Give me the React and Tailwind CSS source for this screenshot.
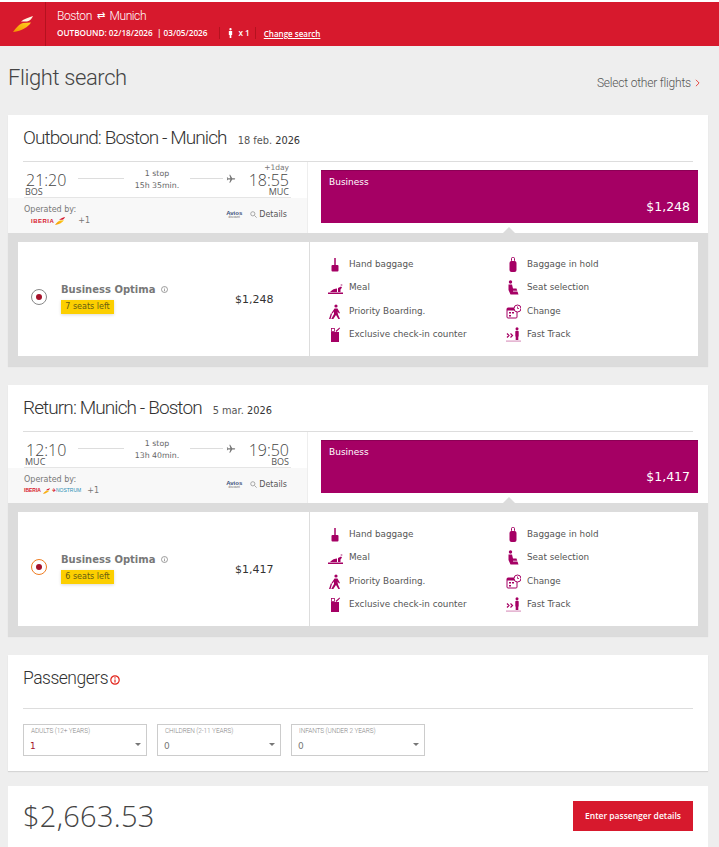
const bodyFont = "font-['Verdana','DejaVu_Sans',sans-serif]";
const lightFont = "font-['Roboto',sans-serif] font-light";
const digitFont = "font-['Open_Sans',sans-serif] font-light";
const smallBold = "font-['Open_Sans',sans-serif] font-semibold";

function Wing({ className, top = "#d7192d" }) {
	return (
		<svg viewBox="0 0 20 16" className={className}>
			<defs>
				<linearGradient id="wingFill" x1="0" y1="1" x2="1" y2="0">
					<stop offset="0" stopColor="#f39200" />
					<stop offset="1" stopColor="#ffd21f" />
				</linearGradient>
			</defs>
			<path d="M0 16 C3 12 6 8 10 7 L18 6.500 C15 11 9 15 0 16Z" fill="url(#wingFill)" />
			<path d="M8 5.500 C11 3 15 1.500 20 0 C19 2.500 17 5 14 5.500Z" fill={top} />
		</svg>
	);
}

const icons = {
	hand: (
		<>
			<rect x="6" y="1" width="2" height="7" opacity="0.75" />
			<rect x="3.5" y="8" width="7" height="6.5" rx="1" />
		</>
	),
	hold: (
		<>
			<rect x="5.5" y="0.5" width="3" height="4" rx="1" fill="none" stroke="currentColor" />
			<rect x="3.5" y="4" width="7" height="11" rx="2" />
		</>
	),
	meal: (
		<>
			<path d="M0 12.500h15V14H0z" />
			<path d="M2 12 C4 9.500 7 8.500 9 8.500 L9 12Z" />
			<path d="M10 12 V8 l3-1.500 1 1-1.500 2 v2.500Z" />
			<circle cx="13.500" cy="5" r="1" opacity="0.5" />
		</>
	),
	seat: (
		<>
			<circle cx="4.500" cy="2" r="1.700" />
			<path d="M2.500 4.500h3.500l1 4h3.500l2 6H4.500L2.500 10Z" />
			<path d="M7 10.500h5v1.500H7z" fill="white" opacity="0.5" />
		</>
	),
	boarding: (
		<>
			<circle cx="8" cy="2" r="1.600" />
			<path d="M6.500 4.500h3l2.500 4.500-1 .6-1.500-2 .5 3 2 4.500h-1.600L8 11l-3 4.500H3L6 10V7.500L4.500 9.500 3.500 9Z" />
			<path d="M1 15 3 9l1 1-1.500 5Z" />
		</>
	),
	change: (
		<>
			<rect x="1" y="4" width="10" height="10" rx="1" fill="none" stroke="currentColor" />
			<path d="M1 4h10v2.500H1z" />
			<rect x="3" y="8" width="2" height="1.500" />
			<rect x="6" y="8" width="2" height="1.500" />
			<rect x="3" y="11" width="2" height="1.500" />
			<circle cx="11.500" cy="4.500" r="3.500" fill="white" stroke="currentColor" />
			<path d="M11.500 2.500v2h1.500" fill="none" stroke="currentColor" strokeWidth="0.8" />
		</>
	),
	counter: (
		<>
			<path d="M3 5h8v10H3z" />
			<rect x="3.500" y="1.500" width="3" height="3" fill="none" stroke="currentColor" strokeWidth="0.8" />
			<path d="M7.500 4 11.500 0.500l.6.7L8.500 5Z" />
		</>
	),
	fast: (
		<>
			<path d="M1 6.500 3 8.500 1 10.500M4.500 6.500 6.500 8.500 4.500 10.500" fill="none" stroke="currentColor" strokeWidth="1.200" />
			<circle cx="11" cy="1.800" r="1.500" />
			<rect x="9.300" y="3.800" width="3.400" height="6" rx="1" />
			<rect x="9.700" y="9" width="2.600" height="4" />
			<rect x="0" y="13.500" width="15" height="1.200" opacity="0.4" />
		</>
	),
};

function Feature({ icon, label }) {
	return (
		<div className="flex items-center h-[23.3px]">
			<svg viewBox="0 0 15 15" className="w-[15px] h-[15px] text-[#a50064] fill-current shrink-0 mr-[6px]">
				{icons[icon]}
			</svg>
			<span className={`${bodyFont} text-[8.8px] text-[#555] whitespace-nowrap`}>{label}</span>
		</div>
	);
}

function FlightSection({ title, date, dep, depCode, arr, arrCode, plusDay, duration, logos, price, seats, focusRadio }) {
	return (
		<section className="ml-2 w-[700px] bg-white shadow-[0_1px_1px_rgba(0,0,0,0.08)]">
			<div className="mx-[15px] h-[47px] border-b border-[#ddd] flex items-center">
				<h2 className={`${lightFont} text-[19px] tracking-[-0.9px] text-[#333] whitespace-nowrap`}>{title}</h2>
				<span className={`${bodyFont} text-[9.800px] text-[#555] ml-[11px] pt-[6px] whitespace-nowrap`}>{date}</span>
			</div>
			<div className="flex h-[71px]">
				<div className="w-[300px] border-r border-[#eee] flex flex-col">
					<div className="h-[36px] mx-[16px] border-b border-[#e5e5e5] flex items-start relative">
						<div className="w-[44px] pl-[2px] pt-[10px] shrink-0">
							<div className={`${digitFont} text-[16px] leading-[16px] text-[#444]`}>{dep}</div>
							<div className={`${digitFont} text-[9px] leading-[8px] text-[#555] font-normal -ml-[1px]`}>{depCode}</div>
						</div>
						<div className="w-[46px] h-px bg-[#ddd] mt-[16px] ml-[10px]" />
						<div className={`${bodyFont} w-[66px] text-center text-[7.800px] leading-[12px] text-[#666] pt-[6px]`}>
							1 stop
							<br />
							{duration}
						</div>
						<div className="w-[33px] h-px bg-[#ddd] mt-[16px]" />
						<svg viewBox="0 0 24 24" className="w-[10px] h-[10px] fill-[#777] mt-[12px] ml-[3px] rotate-90">
							<path d="M21 16v-2l-8-5V3.500a1.500 1.500 0 0 0-3 0V9l-8 5v2l8-2.500V19l-2 1.500V22l3.500-1 3.500 1v-1.500L13 19v-5.500z" />
						</svg>
						<div className="flex-1 text-right pt-[10px] pr-[2px] relative">
							{plusDay && <div className={`${bodyFont} absolute right-[2px] top-[2px] text-[7.500px] leading-[8px] text-[#777]`}>+1day</div>}
							<div className={`${digitFont} text-[16px] leading-[16px] text-[#444]`}>{arr}</div>
							<div className={`${digitFont} text-[9px] leading-[8px] text-[#555] font-normal`}>{arrCode}</div>
						</div>
					</div>
					<div className="flex-1 bg-[#f8f8f8] pl-[16px] pr-[20px] flex items-center justify-between">
						<div>
							<div className={`${bodyFont} text-[8px] leading-[11px] text-[#777]`}>Operated by:</div>
							{logos}
						</div>
						<div className="flex items-center pb-[2px]">
							<div className="text-center mr-[8px] font-['Liberation_Sans',sans-serif] leading-none">
								<div className="text-[6px] font-bold text-[#3d4f7c]">Avios</div>
								<div className="text-[3px] text-[#666]">discount</div>
							</div>
							<svg viewBox="0 0 10 10" className="w-[7px] h-[7px] mr-[2px] fill-none stroke-[#888]">
								<circle cx="4" cy="4" r="3" />
								<path d="M6.500 6.500 9.500 9.500" />
							</svg>
							<span className={`${bodyFont} text-[8px] text-[#555]`}>Details</span>
						</div>
					</div>
				</div>
				<div className="flex-1 pl-[13px] pr-[10px] pt-[8px] relative">
					<div className="h-[53px] bg-[#a50064] border-t border-[#8c0055] px-2 pt-[6px] relative">
						<div className={`${bodyFont} text-[9px] leading-[11px] text-white`}>Business</div>
						<div className={`${bodyFont} absolute right-2 bottom-[9px] text-[12.500px] leading-[15px] text-white`}>{price}</div>
					</div>
					<div className="absolute bottom-0 left-[195px] w-0 h-0 border-x-[6px] border-x-transparent border-b-[6px] border-b-[#dcdcdc]" />
				</div>
			</div>
			<div className="bg-[#dcdcdc] px-[10px] pt-[9px] pb-[10px]">
				<div className="bg-white h-[114px] flex">
					<div className="w-[292px] border-r border-[#ddd] flex items-start relative">
						<div className={`w-[16px] h-[16px] rounded-full border ${focusRadio ? "border-[#ef7d22]" : "border-[#888]"} flex items-center justify-center ml-[13px] mt-[47px] shrink-0`}>
							<div className="w-[6px] h-[6px] rounded-full bg-[#a5112a]" />
						</div>
						<div className="ml-[14px] pt-[40px]">
							<div className="flex items-center">
								<span className={`${bodyFont} text-[10px] font-bold text-[#777] whitespace-nowrap`}>Business Optima</span>
								<svg viewBox="0 0 10 10" className="w-[7px] h-[7px] ml-[6px] fill-none stroke-[#777]">
									<circle cx="5" cy="5" r="4.300" />
									<path d="M5 4.500v3M5 2.500v1" />
								</svg>
							</div>
							<div className={`${bodyFont} mt-[3px] w-[53px] h-[14px] bg-[#fccf00] text-[8px] leading-[14px] text-[#665c14] text-center shadow-[0_1px_3px_rgba(0,0,0,0.15)] whitespace-nowrap`}>
								{seats} seats left
							</div>
						</div>
						<div className={`${bodyFont} absolute left-[217px] top-[50px] text-[11px] text-[#333]`}>{price}</div>
					</div>
					<div className="flex-1 pl-[18px] pt-[11px] grid grid-cols-[178px_1fr] content-start">
						<Feature icon="hand" label="Hand baggage" />
						<Feature icon="hold" label="Baggage in hold" />
						<Feature icon="meal" label="Meal" />
						<Feature icon="seat" label="Seat selection" />
						<Feature icon="boarding" label="Priority Boarding." />
						<Feature icon="change" label="Change" />
						<Feature icon="counter" label="Exclusive check-in counter" />
						<Feature icon="fast" label="Fast Track" />
					</div>
				</div>
			</div>
		</section>
	);
}

function PassengerSelect({ label, value, red, width }) {
	return (
		<div className={`${width} h-[32px] border border-[#ccc] relative`}>
			<div className={`${lightFont} absolute left-[7px] top-[2px] text-[6.500px] tracking-[-0.1px] leading-[9px] text-[#888] whitespace-nowrap`}>{label}</div>
			<div className={`${bodyFont} absolute left-[6px] top-[15px] text-[9px] leading-[12px] ${red ? "text-[#a5112a]" : "text-[#777]"}`}>{value}</div>
			<div className="absolute right-[5px] top-[18px] w-0 h-0 border-x-[3px] border-x-transparent border-t-[3px] border-t-[#777]" />
		</div>
	);
}

export default function App() {
	return (
		<div className="w-[719px] h-[847px] overflow-hidden bg-[#eee]">
			<div className="h-[2px] bg-white" />
			<header className="h-[44px] bg-[#d7192d] flex text-white">
				<div className="w-[46px] border-r border-[#b5121f] flex items-center justify-center shrink-0">
					<Wing className="w-[20px] h-[16px]" top="#fff3e0" />
				</div>
				<div className="pl-[11px] pt-[5px]">
					<div className={`${lightFont} text-[12px] tracking-[-0.4px] leading-[18px] flex items-center`}>
						Boston
						<span className="mx-[5px] text-[10px] leading-none">⇄</span>
						Munich
					</div>
					<div className={`${smallBold} flex items-center text-[8.200px] h-[14px] mt-[1px]`}>
						<span className="whitespace-nowrap">OUTBOUND: 02/18/2026&nbsp;&nbsp;|&nbsp;03/05/2026</span>
						<span className="flex items-center border-l border-[#b5121f] ml-[12px] pl-[8px] h-[12px]">
							<svg viewBox="0 0 6 12" className="w-[5px] h-[10px] fill-white mr-[5px]">
								<circle cx="3" cy="1.500" r="1.400" />
								<path d="M1 3.500h4v5H4v3.500H2V8.500H1z" />
							</svg>
							x 1
						</span>
						<a href="#" className="border-l border-[#b5121f] ml-[5px] pl-[8px] h-[12px] underline whitespace-nowrap text-[8px] leading-[13px]">Change search</a>
					</div>
				</div>
			</header>
			<div className="h-[69px] pl-2 pr-[19px] flex items-start justify-between">
				<h1 className={`${lightFont} text-[22px] tracking-[-0.4px] leading-[30px] mt-[17px] text-[#444]`}>Flight search</h1>
				<div className={`${lightFont} text-[12px] tracking-[-0.2px] mt-[28px] text-[#555] flex items-center`}>
					Select other flights
					<svg viewBox="0 0 6 10" className="w-[5px] h-[8px] ml-[4px] fill-none stroke-[#e2231a]">
						<path d="M1 1l4 4-4 4" />
					</svg>
				</div>
			</div>
			<div className="flex flex-col gap-[19px]">
				<FlightSection
					title="Outbound: Boston - Munich"
					date={<>18 feb. <span className="text-[#333]">2026</span></>}
					dep="21:20"
					depCode="BOS"
					arr="18:55"
					arrCode="MUC"
					plusDay
					duration="15h 35min."
					price="$1,248"
					seats="7"
					logos={
						<div className="flex items-center h-[13px] pl-[7px]">
							<span className="font-['Liberation_Sans',sans-serif] font-bold text-[6px] tracking-[0.5px] text-[#d7192d]">IBERIA</span>
							<Wing className="w-[10px] h-[8px] ml-[1px]" />
							<span className={`${bodyFont} text-[8px] text-[#777] ml-[13px]`}>+1</span>
						</div>
					}
				/>
				<FlightSection
					title="Return: Munich - Boston"
					date={<>5 mar. <span className="text-[#333]">2026</span></>}
					dep="12:10"
					depCode="MUC"
					arr="19:50"
					arrCode="BOS"
					duration="13h 40min."
					price="$1,417"
					seats="6"
					focusRadio
					logos={
						<div className="flex items-center h-[13px]">
							<span className="font-['Liberation_Sans',sans-serif] font-bold text-[5px] text-[#d7192d]">IBERIA</span>
							<Wing className="w-[7px] h-[6px] mx-[2px]" />
							<span className="font-['Liberation_Sans',sans-serif] font-bold text-[5px] text-[#d7192d]">✈</span>
							<span className="font-['Liberation_Sans',sans-serif] text-[5px] text-[#2a8fb5]">NOSTRUM</span>
							<span className={`${bodyFont} text-[8px] text-[#777] ml-[6px]`}>+1</span>
						</div>
					}
				/>
				<section className="ml-2 w-[700px] bg-white h-[116px] px-[15px] shadow-[0_1px_1px_rgba(0,0,0,0.1)]">
					<div className="h-[54px] border-b border-[#ddd] flex items-center pb-[6px]">
						<h2 className={`${lightFont} text-[17.500px] tracking-[-0.5px] text-[#333]`}>Passengers</h2>
						<svg viewBox="0 0 10 10" className="w-[10px] h-[10px] ml-[2px] mt-[2px] fill-none stroke-[#e2231a]">
							<circle cx="5" cy="5" r="4.200" strokeWidth="1.200" />
							<path d="M5 4.500v3M5 2.300v1.200" strokeWidth="1.200" />
						</svg>
					</div>
					<div className="flex gap-[10px] mt-[15px]">
						<PassengerSelect label="ADULTS (12+ YEARS)" value="1" red width="w-[124px]" />
						<PassengerSelect label="CHILDREN (2-11 YEARS)" value="0" width="w-[124px]" />
						<PassengerSelect label="INFANTS (UNDER 2 YEARS)" value="0" width="w-[134px]" />
					</div>
				</section>
			</div>
			<section className="ml-2 w-[700px] mt-[15px] bg-white h-[70px] px-[15px] flex items-start justify-between">
				<div className={`${digitFont} text-[29px] leading-[36px] mt-[12px] text-[#444] tracking-[0.3px]`}>$2,663.53</div>
				<button className={`${smallBold} mt-[15px] w-[120px] h-[30px] bg-[#d7192d] text-white text-[8.500px]`}>Enter passenger details</button>
			</section>
		</div>
	);
}
